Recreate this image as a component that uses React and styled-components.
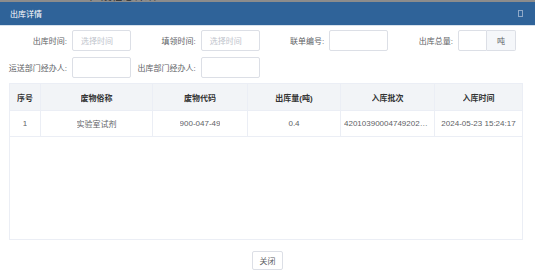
import styled, { createGlobalStyle } from "styled-components";

const Global = createGlobalStyle`
  html, body {
    margin: 0;
    padding: 0;
    background: #ffffff;
    font-family: "Liberation Sans", "Noto Sans CJK SC", sans-serif;
  }
`;

const Page = styled.div`
  width: 535px;
  height: 277px;
  overflow: hidden;
  background: #ffffff;
  position: relative;
`;

const Backdrop = styled.div`
  height: 2px;
  overflow: hidden;
  background: #8c8c8c;
  padding-left: 90px;
  span {
    display: block;
    margin-top: -9px;
    font-size: 11px;
    line-height: 11px;
    color: #2b2b2b;
  }
`;

const Header = styled.div`
  height: 23px;
  display: flex;
  align-items: center;
  justify-content: space-between;
  padding: 0 12px 0 10px;
  background: #2f6399;
  border-bottom: 1px solid #d6e1ec;
  color: #ffffff;
  font-size: 8px;
`;

const MaxIcon = styled.span`
  width: 3px;
  height: 5px;
  border: 1px solid #8fa9c8;
`;

const Form = styled.div`
  display: grid;
  grid-template-columns: repeat(4, 128.67px);
  row-gap: 6px;
  padding: 4px 0 0 8px;
`;

const Item = styled.div`
  display: flex;
  align-items: center;
  gap: 5px;
`;

const Label = styled.label`
  width: 59px;
  text-align: right;
  font-size: 8px;
  color: #606266;
  white-space: nowrap;
`;

const Input = styled.div`
  width: ${(p) => p.$w || 59}px;
  height: 21px;
  box-sizing: border-box;
  border: 1px solid #dcdfe6;
  border-radius: ${(p) => (p.$addon ? "2px 0 0 2px" : "2px")};
  display: flex;
  align-items: center;
  padding-left: 8px;
  font-size: 8px;
  color: #c0c4cc;
`;

const Addon = styled.div`
  width: 29px;
  height: 21px;
  box-sizing: border-box;
  border: 1px solid #dcdfe6;
  border-left: none;
  border-radius: 0 2px 2px 0;
  background: #f5f7fa;
  display: flex;
  align-items: center;
  justify-content: center;
  font-size: 8px;
  color: #606266;
`;

const Group = styled.div`
  display: flex;
`;

const Table = styled.div`
  margin: 5px 12px 0 9px;
  height: 157px;
  box-sizing: border-box;
  border: 1px solid #ebeef5;
`;

const Row = styled.div`
  display: grid;
  grid-template-columns: 31px 112px 95px 93px 94px 87px;
  height: ${(p) => (p.$head ? 26 : 25)}px;
  background: ${(p) => (p.$head ? "#f2f4f7" : "#ffffff")};
  border-bottom: 1px solid #ebeef5;
`;

const Cell = styled.div`
  display: flex;
  align-items: center;
  justify-content: center;
  padding: 0 3px;
  min-width: 0;
  border-right: ${(p) => (p.$last ? "none" : "1px solid #ebeef5")};
  font-size: 8px;
  font-weight: ${(p) => (p.$head ? 700 : 400)};
  color: ${(p) => (p.$head ? "#333333" : "#606266")};
  span {
    overflow: hidden;
    white-space: nowrap;
    text-overflow: ellipsis;
  }
`;

const Footer = styled.div`
  display: flex;
  justify-content: center;
  padding-top: 11px;
`;

const Button = styled.button`
  width: 31px;
  height: 19px;
  padding: 0;
  border: 1px solid #dcdfe6;
  border-radius: 2px;
  background: #ffffff;
  font-family: inherit;
  font-size: 8px;
  color: #606266;
`;

const headers = ["序号", "废物俗称", "废物代码", "出库量(吨)", "入库批次", "入库时间"];
const rows = [
  ["1", "实验室试剂", "900-047-49", "0.4", "420103900047492024052315241700", "2024-05-23 15:24:17"],
];

const App = () => (
  <Page>
    <Global />
    <Backdrop>
      <span>产废信息详细</span>
    </Backdrop>
    <Header>
      <span>出库详情</span>
      <MaxIcon />
    </Header>
    <Form>
      <Item>
        <Label>出库时间:</Label>
        <Input>选择时间</Input>
      </Item>
      <Item>
        <Label>填领时间:</Label>
        <Input>选择时间</Input>
      </Item>
      <Item>
        <Label>联单编号:</Label>
        <Input />
      </Item>
      <Item>
        <Label>出库总量:</Label>
        <Group>
          <Input $w={29} $addon />
          <Addon>吨</Addon>
        </Group>
      </Item>
      <Item>
        <Label>运送部门经办人:</Label>
        <Input />
      </Item>
      <Item>
        <Label>出库部门经办人:</Label>
        <Input />
      </Item>
    </Form>
    <Table>
      <Row $head>
        {headers.map((h, i) => (
          <Cell key={h} $head $last={i === headers.length - 1}>
            <span>{h}</span>
          </Cell>
        ))}
      </Row>
      {rows.map((r, ri) => (
        <Row key={ri}>
          {r.map((c, i) => (
            <Cell key={i} $last={i === r.length - 1}>
              <span>{c}</span>
            </Cell>
          ))}
        </Row>
      ))}
    </Table>
    <Footer>
      <Button>关闭</Button>
    </Footer>
  </Page>
);

export default App;
